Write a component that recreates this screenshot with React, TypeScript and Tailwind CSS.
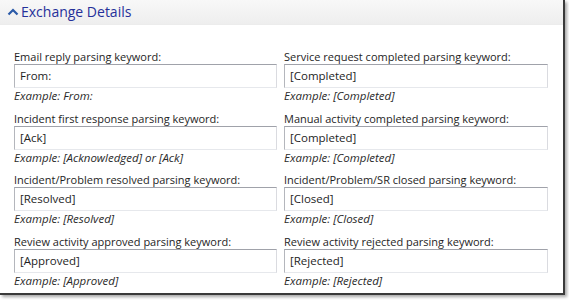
import React from "react";

const fields: [string, string, string][] = [
  ["Email reply parsing keyword:", "From:", "Example: From:"],
  ["Service request completed parsing keyword:", "[Completed]", "Example: [Completed]"],
  ["Incident first response parsing keyword:", "[Ack]", "Example: [Acknowledged] or [Ack]"],
  ["Manual activity completed parsing keyword:", "[Completed]", "Example: [Completed]"],
  ["Incident/Problem resolved parsing keyword:", "[Resolved]", "Example: [Resolved]"],
  ["Incident/Problem/SR closed parsing keyword:", "[Closed]", "Example: [Closed]"],
  ["Review activity approved parsing keyword:", "[Approved]", "Example: [Approved]"],
  ["Review activity rejected parsing keyword:", "[Rejected]", "Example: [Rejected]"],
];

function Field({ label, value, example }: { label: string; value: string; example: string }) {
  return (
    <div className="flex flex-col">
      <div className="h-[14px] text-[11px] leading-[14px] text-[#1e1e1e]">{label}</div>
      <div className="h-[24px] border border-t-[#a0a2aa] border-l-[#b4b6bc] border-r-[#dadbe0] border-b-[#e6e8ec] bg-white pl-[5px] text-[11.5px] leading-[22px] text-[#1e1e1e]">
        {value}
      </div>
      <div className="h-[14px] text-[11.5px] leading-[15px] italic text-[#2a2a2a]">{example}</div>
    </div>
  );
}

export default function App() {
  return (
    <div
      className="relative h-[300px] w-[569px] overflow-hidden bg-white"
      style={{ fontFamily: '"Open Sans", "Noto Sans", sans-serif' }}
    >
      <div className="h-[295px] w-[565px] border-r-[2px] border-b-[2px] border-[#3a3a3a] bg-white shadow-[2px_2px_3px_rgba(0,0,0,0.35)]">
        <div className="flex h-[25px] items-center border-b border-[#ececec] bg-gradient-to-b from-[#f8f8f8] to-[#eeeeee] pl-[7px]">
          <svg width="12" height="8" viewBox="0 0 12 8" className="mr-[2px]">
            <path d="M1.5 6.5 L6 2 L10.5 6.5" fill="none" stroke="#2b5aa8" strokeWidth="2.2" />
          </svg>
          <span className="text-[14px] leading-[20px] text-[#25309a]">Exchange Details</span>
        </div>
        <div className="grid grid-cols-[263px_264px] gap-x-[7px] gap-y-[9.5px] pl-[14px] pt-[25px]">
          {fields.map(([l, v, e], i) => (
            <Field key={i} label={l} value={v} example={e} />
          ))}
        </div>
      </div>
    </div>
  );
}
